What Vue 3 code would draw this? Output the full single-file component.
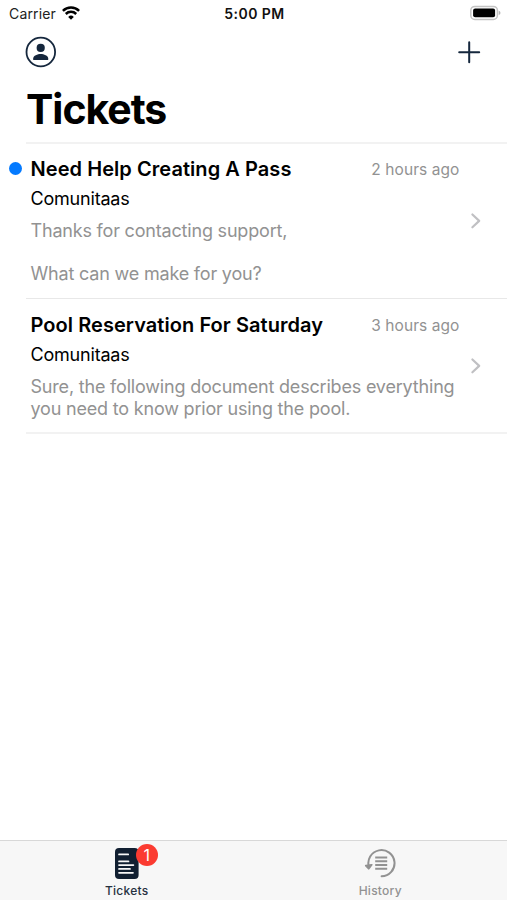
<script setup>
const tickets = [
  {
    title: 'Need Help Creating A Pass',
    sender: 'Comunitaas',
    body: 'Thanks for contacting support,\n\nWhat can we make for you?',
    time: '2 hours ago',
    unread: true,
  },
  {
    title: 'Pool Reservation For Saturday',
    sender: 'Comunitaas',
    body: 'Sure, the following document describes everything\nyou need to know prior using the pool.',
    time: '3 hours ago',
    unread: false,
  },
]
</script>

<template>
  <div class="screen">
    <div class="status">
      <div class="carrier">
        <span class="carrier-name">Carrier</span>
        <svg width="18" height="14" viewBox="0 0 18 14" fill="none" stroke="#000" stroke-width="2.5">
          <path d="M0.9 4.8a11.6 11.6 0 0 1 16.2 0" />
          <path d="M3.8 8a7.4 7.4 0 0 1 10.4 0" />
          <path d="M9 13.7L6.2 10.9a4 4 0 0 1 5.6 0z" fill="#000" stroke="none" />
        </svg>
      </div>
      <span class="clock">5:00 PM</span>
      <svg class="battery" width="32" height="16" viewBox="0 0 32 16">
        <rect x="0.8" y="1.4" width="26.6" height="13" rx="4" fill="#fff" stroke="#c4c4c4" stroke-width="1.5" />
        <rect x="3.1" y="3.6" width="22" height="8.6" rx="2" fill="#000" />
        <path d="M28.7 5.7q1.8.6 1.8 2.2t-1.8 2.2z" fill="#b5b5b5" />
      </svg>
    </div>

    <div class="nav">
      <svg width="32" height="32" viewBox="0 0 32 32">
        <circle cx="15.8" cy="16" r="14.3" fill="none" stroke="#15273d" stroke-width="1.8" />
        <circle cx="15.7" cy="11.9" r="4.1" fill="#15273d" />
        <path d="M8.2 24v-1.5c0-3.1 4.4-4.6 7.5-4.6s7.5 1.5 7.5 4.6V24z" fill="#15273d" />
      </svg>
      <svg width="24" height="24" viewBox="0 0 24 24" stroke="#15273d" stroke-width="2" stroke-linecap="round">
        <path d="M12.2 2.2v20M2.2 12.2h20" />
      </svg>
    </div>

    <h1>Tickets</h1>

    <ul class="list">
      <li v-for="t in tickets" :key="t.title" class="row">
        <div class="gutter"><i v-if="t.unread" class="dot"></i></div>
        <div class="cell">
          <div class="content">
            <div class="heading">
              <span class="title">{{ t.title }}</span>
              <span class="time">{{ t.time }}</span>
            </div>
            <div class="sender">{{ t.sender }}</div>
            <div class="body">{{ t.body }}</div>
          </div>
          <svg width="12" height="18" viewBox="0 0 12 18" fill="none" stroke="#c0c0c3" stroke-width="2.2" stroke-linecap="round" stroke-linejoin="round">
            <path d="M2.4 2.5L9.2 8.9l-6.8 6.4" />
          </svg>
        </div>
      </li>
    </ul>

    <div class="tabs">
      <div class="tab active">
        <div class="icon">
          <svg width="26" height="32" viewBox="0 0 26 32">
            <rect x="1" y="0" width="23.6" height="31" rx="4" fill="#111f31" />
            <g stroke="#f7f7f7" stroke-width="1.7" stroke-linecap="round">
              <path d="M5 6.4h9.2M5 13.4h9.5M5 17.1h14.4M5 20.9h11M5 24.8h14" />
            </g>
          </svg>
          <span class="badge">1</span>
        </div>
        <span class="label">Tickets</span>
      </div>
      <div class="tab">
        <div class="icon">
          <svg width="32" height="32" viewBox="0 0 32 32" fill="none" stroke="#929292" stroke-width="2">
            <path d="M4.9 19A13.1 13.1 0 1 1 17.6 28.3" stroke-linecap="round" />
            <path d="M1.8 17.6l2.9 3.1 3-3.9z" stroke-width="1.8" stroke-linejoin="round" fill="#929292" />
            <path d="M11.2 9.6h12M11.2 13.3h12M11.2 17h12M11.2 20.7h12" />
          </svg>
        </div>
        <span class="label">History</span>
      </div>
    </div>
  </div>
</template>

<style>
body {
  margin: 0;
  background: #fff;
}
</style>

<style scoped>
.screen {
  display: flex;
  flex-direction: column;
  width: 507px;
  height: 900px;
  overflow: hidden;
  background: #fff;
  color: #000;
  font-family: Inter, "Liberation Sans", sans-serif;
}
svg {
  display: block;
  flex: none;
}
.status {
  display: grid;
  grid-template-columns: 1fr auto 1fr;
  align-items: center;
  height: 26px;
  padding: 0 5px 0 9px;
  font-size: 14px;
}
.carrier {
  display: flex;
  align-items: center;
  gap: 6px;
}
.carrier-name {
  color: #222;
  letter-spacing: 0.15px;
}
.clock {
  position: relative;
  left: -1px;
  font-weight: 600;
  letter-spacing: 0.45px;
  color: #111;
}
.battery {
  justify-self: end;
}
.nav {
  display: flex;
  align-items: center;
  justify-content: space-between;
  height: 48px;
  padding: 2px 26px 0 25px;
}
h1 {
  margin: 8px 0 0 26px;
  height: 58px;
  font-size: 41px;
  line-height: 50px;
  font-weight: 700;
  letter-spacing: -1.05px;
}
.list {
  margin: 0;
  padding: 0;
  list-style: none;
}
.row {
  display: flex;
}
.gutter {
  flex: none;
  width: 17px;
  padding: 20px 0 0 9px;
}
.dot {
  display: block;
  width: 13px;
  height: 13px;
  border-radius: 50%;
  background: #047aff;
}
.cell {
  flex: 1;
  display: flex;
  align-items: center;
  justify-content: space-between;
  padding: 14px 25px 12px 4.5px;
  border-bottom: 2px solid #f2f2f2;
}
.row:first-child .cell {
  padding-top: 13px;
  padding-bottom: 13px;
  border-top: 2px solid #f2f2f2;
  border-bottom: 1px solid #e8e8e8;
}
.content {
  width: 429px;
}
.heading {
  display: flex;
  align-items: center;
  justify-content: space-between;
  height: 24px;
}
.title {
  font-size: 20px;
  font-weight: 600;
  letter-spacing: 0.06px;
  white-space: nowrap;
}
.time {
  font-size: 15.5px;
  letter-spacing: 0.08px;
  color: #929292;
  white-space: nowrap;
}
.sender {
  margin-top: 7px;
  font-size: 18px;
  line-height: 22px;
  letter-spacing: -0.2px;
}
.body {
  margin-top: 10px;
  font-size: 18px;
  line-height: 21.7px;
  letter-spacing: -0.19px;
  color: #929292;
  white-space: pre;
}
.tabs {
  display: flex;
  height: 59px;
  margin-top: auto;
  border-top: 1px solid #d8d8d8;
  background: #f7f7f7;
}
.tab {
  flex: 1;
  display: flex;
  flex-direction: column;
  align-items: center;
  padding-top: 7px;
  color: #929292;
}
.tab.active {
  color: #26313f;
}
.icon {
  position: relative;
}
.badge {
  position: absolute;
  top: -4px;
  left: 22px;
  width: 22px;
  height: 22px;
  border-radius: 50%;
  background: #fb3b31;
  color: #fff;
  font-size: 16px;
  line-height: 22px;
  text-align: center;
}
.label {
  margin-top: 3px;
  font-size: 12px;
  line-height: 15px;
  font-weight: 500;
  letter-spacing: 0.25px;
}
</style>
